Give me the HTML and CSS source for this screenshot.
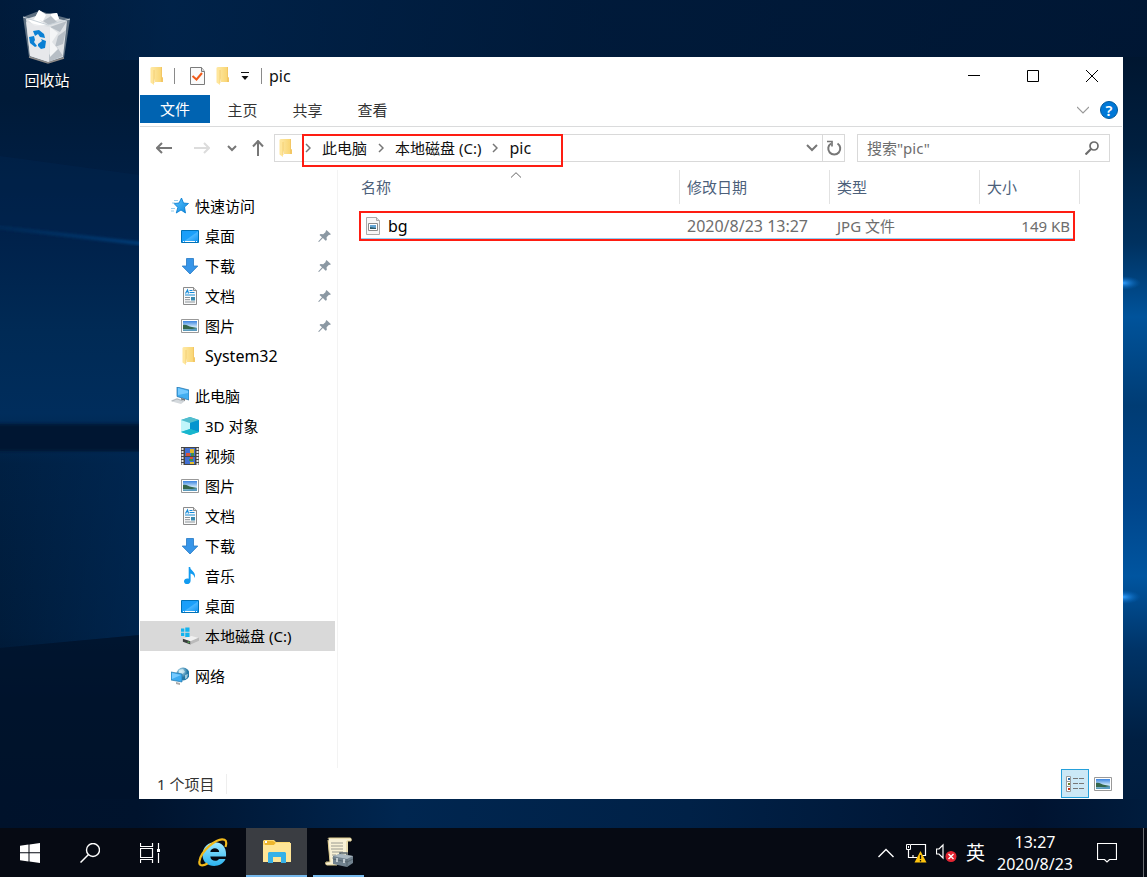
FILE: index.html
```html
<!DOCTYPE html>
<html lang="zh-CN">
<head>
<meta charset="utf-8">
<meta name="viewport" content="width=device-width, initial-scale=1">
<title>pic</title>
<link rel="stylesheet" href="styles.css">
</head>
<body>
<svg class="defs" aria-hidden="true">
  <defs>
    <linearGradient id="gFolder" x1="0" x2="1"><stop offset="0" stop-color="#fee9a6"/><stop offset="1" stop-color="#f8d26b"/></linearGradient>
    <linearGradient id="gDesk" x1="0" y1="0" x2="1" y2="1"><stop offset="0" stop-color="#1a9df8"/><stop offset=".5" stop-color="#1aa0fb"/><stop offset=".55" stop-color="#45b5ff"/><stop offset="1" stop-color="#0b90f0"/></linearGradient>
    <linearGradient id="gSky" x1="0" y1="0" x2="0" y2="1"><stop offset="0" stop-color="#3b84e0"/><stop offset=".6" stop-color="#cfe8fa"/><stop offset="1" stop-color="#4c90a8"/></linearGradient>
    <linearGradient id="gStar" x1="0" y1="0" x2="1" y2="1"><stop offset="0" stop-color="#5cc4ff"/><stop offset="1" stop-color="#0b87dd"/></linearGradient>
    <linearGradient id="gIe" x1="0" y1="0" x2="0" y2="1"><stop offset="0" stop-color="#a0eaff"/><stop offset="1" stop-color="#2bb3f0"/></linearGradient>
    <radialGradient id="gGlobe" cx=".35" cy=".3"><stop offset="0" stop-color="#c6e8f6"/><stop offset="1" stop-color="#2377a5"/></radialGradient>
    <symbol id="folder" viewBox="0 0 18 18"><path d="M2 0h11v10l1 1v4H6z" fill="url(#gFolder)"/><path d="M12 0h1v10l1 1v4h-2z" fill="#f3c765"/><path d="M1.500.5L5 2.500V18l-3.500-2.500z" fill="#ffe69b"/><path d="M5 3v13" stroke="#edc35e" stroke-width=".6"/></symbol>
    <symbol id="star" viewBox="0 0 18 18"><path d="M10.500 1l2 5 5 .5-4 3.500 1 6-4.500-3-4.700 3 1.500-5.600L3 6.500l5-.5z" fill="url(#gStar)" stroke="#0078cf" stroke-width=".8"/><path d="M3 3.500h4M1 6h3M0 11.500h4M0 14h3" stroke="#7fc0e6" stroke-width=".8"/></symbol>
    <symbol id="desktop" viewBox="0 0 18 18"><path d="M.5 3.500h17v12H.5z" fill="url(#gDesk)" stroke="#0072b8"/><path d="M2 14.500h14" stroke="#fff" stroke-dasharray="1 1 10 1"/></symbol>
    <symbol id="download" viewBox="0 0 18 18"><path d="M5.500 1.500h7V9h4.300L9 17 1.200 9h4.300z" fill="#3795e8" stroke="#2478c4" stroke-width=".8"/></symbol>
    <symbol id="document" viewBox="0 0 18 18"><path d="M2.500.5h10l3 3v14h-13z" fill="#fafafa" stroke="#8b8b8b"/><path d="M12.500.5v3h3" fill="#ddd" stroke="#8b8b8b"/><path d="M4.500 6.500L6.500 3l1 3.500M8.500 3.500h3M8.500 5.500h5M4 8h10" stroke="#168bd8" fill="none" stroke-width="1.200"/><path d="M4 10.500h5m-5 2.200h5M4 15h10" stroke="#8a9298"/><path d="M10 10h4v3.500h-4z" fill="#3989ae"/></symbol>
    <symbol id="picture" viewBox="0 0 18 18"><path d="M.5 2.500h17v13H.5z" fill="#fff" stroke="#999"/><path d="M2 4h14v10H2z" fill="url(#gSky)"/><path d="M2 8c4-1 5 2 9 2l5 1v1H2z" fill="#35674c"/><path d="M2 14l9-2 5-1v3z" fill="#5a9bc0"/></symbol>
    <symbol id="computer" viewBox="0 0 18 18"><path d="M6 0l12 3v10L6 9.500z" fill="#41adf0" stroke="#1e6ea9" stroke-width=".7"/><path d="M7 1l10 3v2L7 8z" fill="#75caff"/><path d="M10 11l4 1v2l-4-1z" fill="#777"/><path d="M-1 14l7-3 8 3-4 3z" fill="#d4d9dd"/><path d="M1 14l5-2 6 2" stroke="#9ba1a6" fill="none" stroke-width=".6"/></symbol>
    <symbol id="cube" viewBox="0 0 18 18"><path d="M9 0l9 3v12l-9 3-9-3V3z" fill="#25b7d6"/><path d="M0 3l9-3 9 3-9 3z" fill="#53bdcd"/><path d="M0 3l9 3v6l-9 3z" fill="#c0f5fa"/><path d="M9 6l9-3v12l-9-3z" fill="#0595cf"/><path d="M0 15l9-3 9 3-9 3z" fill="#18b6cd"/></symbol>
    <symbol id="video" viewBox="0 0 18 18"><path d="M0 0h18v18H0z" fill="#454545"/><path d="M1.500 1v17M16.500 1v17" stroke="#e6e6e6" stroke-width="2" stroke-dasharray="2 1"/><path d="M4 1h10v8H4zM4 10h10v7H4z" fill="#416fd2"/><path d="M9 2h4v4H9z" fill="#ddb52c"/><path d="M5 6h4v3H5z" fill="#d85338"/><path d="M10 6h3v3h-3zM8 12h4v2H8z" fill="#3c914b"/><path d="M9 10h3v2H9z" fill="#e0502e"/><path d="M9 15h4v2H9z" fill="#e7be30"/></symbol>
    <symbol id="music" viewBox="0 0 18 18"><path d="M9.200 0c0 4 6 4 4.600 11-.8-3-2.500-4-4.200-4.500v7.200c0 4.500-6.600 4.300-6.600.8 0-2.500 2.500-3.700 4.700-2.800V0z" fill="#129bf0"/></symbol>
    <symbol id="drive" viewBox="-1 0 19 18"><path d="M1 12l9-3 8 2-9 4z" fill="#f0f0f0"/><path d="M1 12l8 2.500V18l-8-3z" fill="#3b3e3e"/><path d="M9 14.500l9-4V14l-9 4z" fill="#bbb"/><path d="M6 15.500h2" stroke="#5ee45e"/><path d="M-1 1h3.500v3.500H-1zM3.500 0H8v4.500H3.500zM-1 5.500h3.500V9H-1zM3.500 5.500H8V10H3.500z" fill="#13b4ef"/></symbol>
    <symbol id="network" viewBox="0 0 18 18"><circle cx="12" cy="7" r="6.500" fill="url(#gGlobe)"/><path d="M8 3l4-1 2 3-3 2-3-1zM14 8l3-1-1 4-2 1z" fill="#e2f4f7" opacity=".65"/><path d="M0 5l11 2v8L0 13z" fill="#3baaf0" stroke="#2177a9" stroke-width=".7"/><path d="M1 6l9 2-9 4z" fill="#75caff"/><path d="M5 15l4 1v2l-4-1z" fill="#aaa"/></symbol>
    <symbol id="pin" viewBox="0 0 14 14"><path d="M8.500 1L13 5.200l-1.500.7-.5-.1-2.400 2.500.2 2.600-1.200.8-2.700-2.800L1 13l-.8-.4L4 8.200 1.500 6l1-1 2.700.2L7.700 3l-.1-.8z" fill="#8b98a3"/></symbol>
    <symbol id="crumb" viewBox="0 0 6 10"><path d="M1 1l4 4-4 4" fill="none" stroke="#777" stroke-width="1.500"/></symbol>
    <symbol id="down" viewBox="0 0 12 8"><path d="M1 1l5 5 5-5" fill="none" stroke="currentColor" stroke-width="2"/></symbol>
  </defs>
</svg>

<main class="desktop">
  <svg class="wallpaper" viewBox="0 0 1147 828" preserveAspectRatio="none" aria-hidden="true">
    <defs>
      <linearGradient id="wl" x1="0" y1="0" x2="0" y2="1">
        <stop offset="0" stop-color="#001b3b"/><stop offset=".12" stop-color="#001a38"/><stop offset=".28" stop-color="#00214a"/><stop offset=".4" stop-color="#002a55"/><stop offset=".5" stop-color="#002d5c"/><stop offset=".56" stop-color="#002043"/><stop offset=".76" stop-color="#001c3b"/><stop offset=".86" stop-color="#00152f"/><stop offset="1" stop-color="#00122b"/>
      </linearGradient>
      <linearGradient id="wr" x1="0" y1="0" x2="0" y2="1">
        <stop offset="0" stop-color="#001630"/><stop offset=".12" stop-color="#001f3f"/><stop offset=".25" stop-color="#00315f"/><stop offset=".35" stop-color="#00539b"/><stop offset=".47" stop-color="#003c74"/><stop offset=".6" stop-color="#00458a"/><stop offset=".7" stop-color="#0055a0"/><stop offset=".8" stop-color="#003366"/><stop offset=".92" stop-color="#001f42"/><stop offset="1" stop-color="#001c3d"/>
      </linearGradient>
      <linearGradient id="wt" x1="0" y1="0" x2="1" y2="0">
        <stop offset="0" stop-color="#00254e" stop-opacity="0"/><stop offset=".15" stop-color="#00254e"/><stop offset=".5" stop-color="#001a3a"/><stop offset="1" stop-color="#001531"/>
      </linearGradient>
      <linearGradient id="wb" x1="0" y1="0" x2="1" y2="0">
        <stop offset="0" stop-color="#00122b"/><stop offset=".12" stop-color="#00132d"/><stop offset=".35" stop-color="#002650"/><stop offset=".6" stop-color="#002147"/><stop offset=".9" stop-color="#001330"/><stop offset="1" stop-color="#001c3d"/>
      </linearGradient>
      <linearGradient id="edge"><stop offset="0" stop-color="#002a58" stop-opacity="0"/><stop offset="1" stop-color="#002a58" stop-opacity=".6"/></linearGradient>
      <linearGradient id="ray" gradientUnits="userSpaceOnUse" x1="0" y1="0" x2="140" y2="0"><stop offset="0" stop-color="#003a70" stop-opacity=".5"/><stop offset="1" stop-color="#00478a"/></linearGradient>
      <radialGradient id="spot"><stop offset="0" stop-color="#34a0ff"/><stop offset="1" stop-color="#0066c0" stop-opacity="0"/></radialGradient>
      <filter id="soft"><feGaussianBlur stdDeviation="1.500"/></filter>
    </defs>
    <path d="M0 0h1147v828H0z" fill="url(#wl)"/>
    <path d="M0 0h1147v60H0z" fill="url(#wt)" opacity=".7"/>
    <path d="M0 156l140 19v68L0 227z" fill="#002650" opacity=".4"/>
    <path d="M-5 227l150 17" stroke="url(#ray)" stroke-width="2.500" filter="url(#soft)"/>
    <path d="M-5 424h160v27H-5z" fill="#001530" filter="url(#soft)"/>
    <path d="M0 452h140v183L0 648z" fill="url(#edge)"/>
    <path d="M0 648l140-13v193H0z" fill="#00122b" opacity=".7"/>
    <path d="M0 799h1147v29H0z" fill="url(#wb)"/>
    <path d="M1100 57h47v742h-47z" fill="url(#wr)"/>
    <ellipse cx="1123" cy="283" rx="18" ry="7" fill="url(#spot)"/>
    <ellipse cx="1123" cy="597" rx="18" ry="7" fill="url(#spot)"/>
  </svg>

  <a class="shortcut" href="#">
    <svg class="bin" viewBox="0 0 48 54" aria-hidden="true">
      <path d="M0 7L16 1l31 8-6 39-16 5-19-6z" fill="#7d8c98" opacity=".75"/>
      <path d="M3 9l10-3 3-6 7 4 11-1 2 6 8 2-4 36-15 5L7 46z" fill="#dfe2e5"/>
      <path d="M16 0l7 5-3 6-9-2zM28 4l6-1 2 6-8 3zM5 10l9-1 10 6-12 1z" fill="#fff"/>
      <path d="M20 11l8-5 6 6-8 3zM27 17l17-6-7 11zM35 26l8-6-3 14-8 3zM26 45l8-8 6 9-14 6z" fill="#b7bec5"/>
      <path d="M27 17l-1 35L7 46 3 12l22 5z" fill="#e8eaec" opacity=".8"/>
      <path d="M27 17l8 6-6 9 6 7-8 8z" fill="#f4f5f6"/>
      <path d="M0 7l25 8 22-6" fill="none" stroke="#c7d0d7"/>
      <path d="M6 47l19 6 16-5" fill="none" stroke="#8f8b88" stroke-width="1.500"/>
      <path d="M10 21l6-1 5 4 1 4-5-1-2-3-3 2zM6 27l5-1 1 4-1 2 3 4-2 1-5-4zM15 34l4-3-1-2 5 2-1 7-4 1-3-3z" fill="#0a80d4"/>
    </svg>
    <span>回收站</span>
  </a>

  <section class="window" aria-label="pic">
    <header class="titlebar">
      <svg class="i18" aria-hidden="true"><use href="#folder"/></svg>
      <span class="rule"></span>
      <button class="quick props" aria-label="属性"><svg viewBox="0 0 16 18"><path d="M.5.5h11l3 4v13H.5z" fill="#fafafa" stroke="#7b7b7b"/><path d="M11.500.5v4h3" fill="#ddd" stroke="#7b7b7b"/><path d="M2.500 9l4 3.500L12 6" fill="none" stroke="#f05a1a" stroke-width="2"/></svg></button>
      <button class="quick" aria-label="新建文件夹"><svg class="i18"><use href="#folder"/></svg></button>
      <button class="quick more" aria-label="自定义快速访问工具栏"><svg viewBox="0 0 8 8"><path d="M0 .5h8" stroke="#111"/><path d="M.5 4h7L4 8z" fill="#111"/></svg></button>
      <span class="rule"></span>
      <h1>pic</h1>
      <div class="controls">
        <button aria-label="最小化"><svg viewBox="0 0 12 12"><path d="M0 5.500h12"/></svg></button>
        <button aria-label="最大化"><svg viewBox="0 0 12 12"><path d="M.5.5h11v11H.5z"/></svg></button>
        <button aria-label="关闭"><svg viewBox="0 0 12 12"><path d="M0 0l12 12M12 0L0 12"/></svg></button>
      </div>
    </header>

    <div class="ribbon">
      <button class="file">文件</button><button>主页</button><button>共享</button><button>查看</button>
      <button class="expand" aria-label="展开功能区"><svg viewBox="0 0 12 8"><path d="M0 1l6 6 6-6" fill="none" stroke="#999" stroke-width="1.200"/></svg></button>
      <button class="help" aria-label="帮助">?</button>
    </div>

    <div class="toolbar">
      <div class="history">
        <button aria-label="后退"><svg viewBox="0 0 16 12"><path d="M16 6H1M6 1L1 6l5 5" stroke="#777"/></svg></button>
        <button class="forward" aria-label="前进"><svg viewBox="0 0 16 12"><path d="M0 6h15M10 1l5 5-5 5" stroke="#dcdcdc"/></svg></button>
        <button class="recent" aria-label="最近位置"><svg viewBox="0 0 12 8"><path d="M2 2l4 4 4-4" stroke="#777"/></svg></button>
        <button class="up" aria-label="上移"><svg viewBox="0 0 12 16"><path d="M6 16V1M1 6.500L6 1l5 5.500" stroke="#777"/></svg></button>
      </div>
      <div class="address">
        <svg class="i18" aria-hidden="true"><use href="#folder"/></svg>
        <nav class="crumbs" aria-label="地址">
          <svg><use href="#crumb"/></svg><a href="#">此电脑</a>
          <svg><use href="#crumb"/></svg><a href="#">本地磁盘 (C:)</a>
          <svg><use href="#crumb"/></svg><a class="latin" href="#">pic</a>
        </nav>
        <button class="drop" aria-label="历史记录"><svg viewBox="0 0 12 8"><use href="#down"/></svg></button>
        <button class="refresh" aria-label="刷新"><svg viewBox="0 0 16 16"><path d="M5 3.500A6 6 0 1 0 11.500 3.500" fill="none" stroke="#777" stroke-width="2"/><path d="M1 1.500h5v5" fill="none" stroke="#777" stroke-width="1.700"/></svg></button>
      </div>
      <label class="search">
        <input type="text" placeholder='搜索"pic"' aria-label="搜索">
        <svg viewBox="0 0 14 14" aria-hidden="true"><circle cx="9" cy="5" r="4" fill="none" stroke="#6c6c6c" stroke-width="1.700"/><path d="M6 8l-5.500 5.500" stroke="#6c6c6c" stroke-width="2.200"/></svg>
      </label>
    </div>

    <div class="content">
      <nav class="tree" aria-label="导航窗格">
        <ul>
          <li class="root"><a href="#"><svg><use href="#star"/></svg>快速访问</a></li>
          <li><a href="#"><svg><use href="#desktop"/></svg>桌面<svg class="pin"><use href="#pin"/></svg></a></li>
          <li><a href="#"><svg><use href="#download"/></svg>下载<svg class="pin"><use href="#pin"/></svg></a></li>
          <li><a href="#"><svg><use href="#document"/></svg>文档<svg class="pin"><use href="#pin"/></svg></a></li>
          <li><a href="#"><svg><use href="#picture"/></svg>图片<svg class="pin"><use href="#pin"/></svg></a></li>
          <li><a class="latin" href="#"><svg><use href="#folder"/></svg>System32</a></li>
        </ul>
        <ul>
          <li class="root"><a href="#"><svg><use href="#computer"/></svg>此电脑</a></li>
          <li><a href="#"><svg><use href="#cube"/></svg>3D 对象</a></li>
          <li><a href="#"><svg><use href="#video"/></svg>视频</a></li>
          <li><a href="#"><svg><use href="#picture"/></svg>图片</a></li>
          <li><a href="#"><svg><use href="#document"/></svg>文档</a></li>
          <li><a href="#"><svg><use href="#download"/></svg>下载</a></li>
          <li><a href="#"><svg><use href="#music"/></svg>音乐</a></li>
          <li><a href="#"><svg><use href="#desktop"/></svg>桌面</a></li>
          <li><a class="current" href="#"><svg><use href="#drive"/></svg>本地磁盘 (C:)</a></li>
        </ul>
        <ul>
          <li class="root"><a href="#"><svg><use href="#network"/></svg>网络</a></li>
        </ul>
      </nav>

      <div class="files">
        <table>
          <thead>
            <tr>
              <th class="name"><div>名称<svg class="sort" viewBox="0 0 10 6" aria-hidden="true"><path d="M0 5.500L5 .7l5 4.800" fill="none" stroke="#666"/></svg></div></th>
              <th class="date"><div>修改日期</div></th>
              <th class="type"><div>类型</div></th>
              <th class="size"><div>大小</div></th>
            </tr>
          </thead>
          <tbody>
            <tr>
              <td class="name"><span class="latin"><svg viewBox="0 0 16 18" aria-hidden="true"><path d="M.5.5h10l3 3v14H.5z" fill="#f7f7f7" stroke="#aaa"/><path d="M10.500.5v3h3" fill="#ddd" stroke="#aaa"/><path d="M2.500 6.500h9v7h-9z" fill="#fff" stroke="#8d8d8d"/><path d="M4 8h6v4H4z" fill="#64a6d6"/><path d="M4 10l6 1v1H4z" fill="#315c68"/></svg>bg</span></td>
              <td class="latin">2020/8/23 13:27</td>
              <td>JPG 文件</td>
              <td class="size">149 KB</td>
            </tr>
          </tbody>
        </table>
      </div>
    </div>

    <footer class="status">
      <span>1 个项目</span>
      <div class="views">
        <button class="on" aria-label="详细信息"><svg viewBox="0 0 18 16"><path d="M.5.500h4v5h-4zM.5 5.500h4v5h-4zM.5 10.500h4v5h-4z" fill="#fff" stroke="#999"/><path d="M7 2.500h5m1 0h5M7 7.500h5m1 0h5M7 12.500h5m1 0h5" stroke="#777"/><path d="M2 2h2v2H2z" fill="#286ea8"/><path d="M2 7h2v2H2z" fill="#708027"/><path d="M2 12h2v2H2z" fill="#c93216"/></svg></button>
        <button aria-label="大图标"><svg class="i18"><use href="#picture"/></svg></button>
      </div>
    </footer>
  </section>
</main>

<footer class="taskbar">
  <button class="task" aria-label="开始"><svg width="20" height="20" viewBox="0 0 20 20"><path d="M0 2.800L8.500 1.600v7.700H0zM9.500 1.400L20 0v9.300H9.500zM0 10.300h8.500v8.100L0 17.200zM9.500 10.300H20V20L9.500 18.600z" fill="#fff"/></svg></button>
  <button class="task" aria-label="搜索"><svg width="20" height="20" viewBox="0 0 20 20"><circle cx="13" cy="7" r="6.500" fill="none" stroke="#fff" stroke-width="1.400"/><path d="M8.500 11.500L.5 19.500" stroke="#fff" stroke-width="1.500"/></svg></button>
  <button class="task" aria-label="任务视图"><svg width="20" height="20" viewBox="0 0 20 20"><path d="M.5 0v3.500h12V0M.5 20v-3.500h12V20M.5 5.500h12v9H.5zM18.500 0v6M18.500 10v10" fill="none" stroke="#fff" stroke-width="1.200"/><path d="M17 6h3v3h-3z" fill="#fff"/></svg></button>
  <button class="task ie" aria-label="Internet Explorer"><svg width="30" height="30" viewBox="0 0 30 30"><path d="M28 18.500H12.300c.3 5 6.700 5.500 8.700 2.500h6.500C23 31.500 4.500 30 4.500 17 4.500 4 19 1 25 7.500c2.700 2.800 3.300 6.500 3 11zM12.300 14h8.900c-.3-5-8.400-5-8.900 0z" fill="url(#gIe)"/><path d="M27.500 9c1.200-4 1-6.500-1-7.300C19-1 3 13 1.500 23c-1 5 3 5.500 8 2.500" fill="none" stroke="#f0b91b" stroke-width="2.200"/></svg></button>
  <button class="task active" aria-label="文件资源管理器"><svg width="28" height="24" viewBox="0 0 28 24"><path d="M1 0h10l2 2h14v20H0V1z" fill="#ffda72"/><path d="M1 1h9l3 2-2 2H2z" fill="#edb52e"/><path d="M2 1h2v2H2z" fill="#fff"/><path d="M0 5h11l2-2h15v19H0z" fill="#ffe596"/><path d="M5 23V13l1-1h16l1 1v10h-5v-6h-8v6z" fill="#36b1e8"/></svg></button>
  <button class="task script" aria-label="服务器管理器"><svg width="28" height="30" viewBox="0 0 28 30"><path d="M4 1h22v3h-3v22c0 1-1 2-2 2H1c-1-2 0-3 2-3h2L3 5z" fill="#f7f0d5"/><path d="M3 2c0-1 1-1 2-1h20c2 0 2 4 0 3h-3v18M3 3l2 22H1c-1 1 0 3 1 3h10" fill="none" stroke="#dccb8e"/><path d="M6 6h12M6 9h12M6 12h12M7 15h11M7 18h4m-4 3h2" stroke="#8f9088" stroke-width=".9"/><path d="M15 18v-2h7v3" fill="none" stroke="#56636c" stroke-width="1.500"/><path d="M8 19l7-2 13 2v7l-6 4-14-3z" fill="#71828f"/><path d="M8 19l7-2 13 2-6 3z" fill="#aab8c1"/><path d="M8 22l14 3 6-3M22 22v8" fill="none" stroke="#56656f"/><path d="M12 21v4m7-3v4" stroke="#dde4e8" stroke-width="1.500"/></svg></button>

  <div class="tray">
    <button aria-label="显示隐藏的图标"><svg width="16" height="10" viewBox="0 0 16 10"><path d="M.5 9L8 1.500 15.500 9" fill="none" stroke="#fff" stroke-width="1.400"/></svg></button>
    <button aria-label="网络"><svg width="22" height="20" viewBox="0 0 22 20"><path d="M5 1.500h14.500v11H16M2.500 6v8.500H11M7 12v3" fill="none" stroke="#fff" stroke-width="1.200"/><path d="M.5 1.500h4v5h-4zM2.500 3v2" fill="none" stroke="#fff"/><path d="M14.500 8l6 11.500h-12z" fill="#ffc40d"/><path d="M14.500 12v4m0 1v1.500" stroke="#111" stroke-width="1.300"/></svg></button>
    <button aria-label="音量"><svg width="22" height="20" viewBox="0 0 22 20"><path d="M.5 6h2.500l4-4v13l-4-4H.5z" fill="none" stroke="#fff" stroke-width="1.200"/><circle cx="15" cy="13.500" r="5.500" fill="#e22532"/><path d="M12.500 11l5 5m0-5l-5 5" stroke="#fff" stroke-width="1.400"/></svg></button>
    <button class="ime">英</button>
    <button class="clock"><time>13:27</time><span>2020/8/23</span></button>
    <button aria-label="通知"><svg width="20" height="20" viewBox="0 0 20 20"><path d="M.5.500h19v16H12.500L10 19 7.500 16.500h-7z" fill="none" stroke="#fff" stroke-width="1.200"/></svg></button>
    <button class="peek" aria-label="显示桌面"></button>
  </div>
</footer>
</body>
</html>
```

FILE: styles.css
```css
* { box-sizing: border-box; }

body {
  margin: 0;
  min-height: 100vh;
  display: flex;
  flex-direction: column;
  background: #001833;
  color: #111;
  font: 15px/20px "Noto Sans", "Noto Sans CJK SC", sans-serif;
}

button {
  display: flex;
  align-items: center;
  justify-content: center;
  padding: 0;
  border: 0;
  background: none;
  color: inherit;
  font: inherit;
}

a { color: inherit; text-decoration: none; }
ul { margin: 0; padding: 0; list-style: none; }
svg { display: block; flex: none; }

.defs { position: absolute; width: 0; height: 0; }
.latin { font-size: 16px; }
.i18 { width: 18px; height: 18px; }

/* Desktop */
.desktop {
  position: relative;
  flex: 1;
  min-height: 780px;
}

.wallpaper {
  position: absolute;
  inset: 0;
  width: 100%;
  height: 100%;
}

.shortcut {
  position: absolute;
  left: 8px;
  top: 10px;
  width: 78px;
  display: flex;
  flex-direction: column;
  align-items: center;
  gap: 6px;
  color: #fff;
  text-shadow: 0 1px 2px #000;
}

.bin { width: 48px; height: 54px; }

/* Explorer window */
.window {
  position: absolute;
  inset: 57px 24px 29px 139px;
  display: flex;
  flex-direction: column;
  padding: 0 1px;
  background: #fff;
}

.titlebar {
  display: flex;
  align-items: center;
  height: 38px;
  padding: 0 1px 0 9px;
}

.rule { width: 1px; height: 16px; background: #8a8a8a; }
.titlebar .i18 + .rule { margin: 0 15px 0 7px; }
.quick + .rule { margin: 0 7px 0 12px; }
.props { margin-right: 9px; }
.props svg { width: 16px; height: 18px; }
.more { margin-left: 8px; }
.more svg { width: 8px; height: 8px; }

.titlebar h1 {
  margin: 0;
  font-size: 16px;
  font-weight: 400;
}

.controls { display: flex; margin-left: auto; }
.controls button { width: 59px; height: 38px; }
.controls svg { width: 12px; height: 12px; fill: none; stroke: #000; }

.ribbon {
  display: flex;
  align-items: center;
  height: 32px;
  padding-bottom: 2px;
  border-bottom: 1px solid #dadbdc;
  color: #333;
}

.ribbon button { width: 65px; height: 28px; }
.ribbon .file {
  width: 70px;
  align-self: flex-start;
  background: #0063b1;
  color: #fff;
}

.ribbon .expand { width: 12px; margin-left: auto; }
.expand svg { width: 12px; height: 8px; }

.ribbon .help {
  width: 18px;
  height: 18px;
  margin: 0 4px 0 11px;
  border: 1px solid #005a9e;
  border-radius: 50%;
  background: #0078d7;
  color: #fff;
  font-weight: 600;
}

.toolbar {
  display: flex;
  padding: 7px 12px 8px 16px;
}

.history { display: flex; align-items: center; margin-right: 10px; }
.history svg { width: 16px; height: 12px; fill: none; stroke-width: 2; }
.history .forward { margin: 0 16px 0 22px; }
.history .recent { margin-right: 14px; }
.history .recent svg { width: 12px; height: 8px; }
.history .up svg { width: 12px; height: 16px; }

.address {
  flex: 1;
  display: flex;
  align-items: center;
  height: 28px;
  border: 1px solid #d9d9d9;
}

.address .i18 { margin: 0 6px 0 3px; }

.crumbs {
  position: relative;
  display: flex;
  align-items: center;
  gap: 11px;
  padding-left: 3px;
  color: #111;
}

.crumbs svg { width: 6px; height: 10px; }

.crumbs::after {
  content: "";
  position: absolute;
  inset: -4px -32px -9px 0;
  border: 2px solid #fe1d12;
}

.drop { width: 20px; height: 26px; margin-left: auto; color: #777; }
.drop svg { width: 12px; height: 8px; }
.refresh { width: 22px; height: 26px; border-left: 1px solid #d9d9d9; }
.refresh svg { width: 16px; height: 16px; }

.search {
  width: 253px;
  height: 28px;
  display: flex;
  align-items: center;
  margin-left: 12px;
  padding: 0 10px 0 9px;
  border: 1px solid #d9d9d9;
}

.search input {
  flex: 1;
  min-width: 0;
  padding: 0;
  border: 0;
  outline: 0;
  background: none;
  font: inherit;
}

.search input::placeholder { color: #6d6d6d; opacity: 1; }
.search svg { width: 14px; height: 14px; }

.content { flex: 1; display: flex; min-height: 0; }

.tree {
  width: 198px;
  padding: 21px 2px 0 0;
  border-right: 1px solid #f3f3f3;
  color: #000;
}

.tree ul + ul { margin-top: 10px; }

.tree a {
  display: flex;
  align-items: center;
  gap: 6px;
  height: 30px;
  padding: 0 3px 0 41px;
}

.tree .root a { padding-left: 31px; }
.tree svg { width: 18px; height: 18px; overflow: visible; }
.tree .pin { width: 14px; height: 14px; margin-left: auto; }
.tree .current { background: #d9d9d9; }

.files { flex: 1; padding: 0 42px 0 15px; }

table {
  width: 100%;
  border-collapse: collapse;
  table-layout: fixed;
}

th { padding: 0 0 7px; font-weight: 400; text-align: left; color: #4c607a; }

th div {
  position: relative;
  display: flex;
  align-items: center;
  height: 34px;
  padding-left: 7px;
  border-right: 1px solid #e2e2e2;
}

th.name div { padding-left: 8px; }
.date, .type { width: 150px; }
th.size { width: 100px; }

.sort {
  position: absolute;
  left: 50%;
  top: 2px;
  width: 10px;
  height: 6px;
  transform: translateX(-50%);
}

tbody tr { position: relative; height: 30px; }

/* Frame round the whole row, hung on its first cell */
td.name::after {
  content: "";
  position: absolute;
  inset: 0 5px 0 6px;
  border: 2px solid #fe1d12;
  box-shadow: inset 0 -1px #8fcdf5;
}

td { padding: 0 0 0 7px; color: #6d6d6d; }
td.name { padding-left: 13px; color: #000; }
td.name span { display: flex; align-items: center; gap: 6px; }
td.name svg { width: 16px; height: 18px; }
td.size { padding-right: 10px; text-align: right; }

.status {
  display: flex;
  align-items: center;
  justify-content: space-between;
  height: 31px;
  padding-left: 17px;
  color: #333;
}

.status > span { padding-right: 12px; border-right: 1px solid #eee; }
.views { display: flex; padding-right: 5px; }
.views button { width: 28px; height: 29px; }
.views .on { border: 1px solid #26a0da; background: #cbe8f6; }
.views .on svg { width: 18px; height: 16px; }

/* Taskbar */
.taskbar {
  display: flex;
  height: 49px;
  background: #060a13;
  color: #fff;
}

.task { width: 60px; }
.task.ie { width: 66px; }
.task.active {
  width: 61px;
  margin-right: 6px;
  border-bottom: 2px solid #76b9ed;
  background: #3a3d42;
}
.task.script { width: 51px; border-bottom: 2px solid #76b9ed; }

.tray {
  display: flex;
  align-items: center;
  gap: 8px;
  margin-left: auto;
}

.tray button:first-child { margin-right: 4px; }
.ime { font-size: 19px; }
.clock {
  flex-direction: column;
  gap: 2px;
  margin: 0 16px 0 4px;
  font-size: 16px;
}

.peek {
  width: 4px;
  height: 49px;
  margin-left: 18px;
  border-left: 1px solid #6b6e73;
}
```
